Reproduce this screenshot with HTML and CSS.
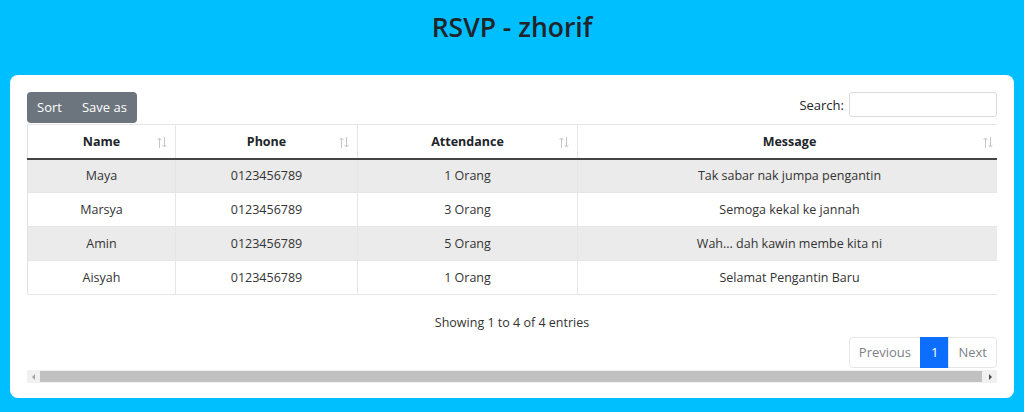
FILE: index.html
```html
<!DOCTYPE html>
<html>
<head>
<meta charset="utf-8">
<link rel="stylesheet" href="styles.css">
</head>
<body>
<header class="top">
  <h1 class="title">RSVP - zhorif</h1>
</header>
<main class="card">
  <div class="wrapper">
    <div class="toolbar">
      <div class="btn-group">
        <button class="btn">Sort</button>
        <button class="btn">Save as</button>
      </div>
      <label class="search">Search: <input class="search-input" type="text"></label>
    </div>
    <div class="scroller">
      <table class="table">
        <colgroup>
          <col class="c1"><col class="c2"><col class="c3"><col class="c4">
        </colgroup>
        <thead>
          <tr>
            <th>Name<svg class="sort" viewBox="0 0 10 11" width="10" height="11"><path d="M2.5 11V1M0.5 3L2.5 1L4.5 3M7.5 0V10M5.5 8L7.5 10L9.5 8"/></svg></th>
            <th>Phone<svg class="sort" viewBox="0 0 10 11" width="10" height="11"><path d="M2.5 11V1M0.5 3L2.5 1L4.5 3M7.5 0V10M5.5 8L7.5 10L9.5 8"/></svg></th>
            <th>Attendance<svg class="sort" viewBox="0 0 10 11" width="10" height="11"><path d="M2.5 11V1M0.5 3L2.5 1L4.5 3M7.5 0V10M5.5 8L7.5 10L9.5 8"/></svg></th>
            <th>Message<svg class="sort" viewBox="0 0 10 11" width="10" height="11"><path d="M2.5 11V1M0.5 3L2.5 1L4.5 3M7.5 0V10M5.5 8L7.5 10L9.5 8"/></svg></th>
          </tr>
        </thead>
        <tbody>
          <tr class="odd"><td>Maya</td><td>0123456789</td><td>1 Orang</td><td>Tak sabar nak jumpa pengantin</td></tr>
          <tr><td>Marsya</td><td>0123456789</td><td>3 Orang</td><td>Semoga kekal ke jannah</td></tr>
          <tr class="odd"><td>Amin</td><td>0123456789</td><td>5 Orang</td><td>Wah... dah kawin membe kita ni</td></tr>
          <tr><td>Aisyah</td><td>0123456789</td><td>1 Orang</td><td>Selamat Pengantin Baru</td></tr>
        </tbody>
      </table>
    </div>
    <div class="info">Showing 1 to 4 of 4 entries</div>
    <div class="pager-row">
      <ul class="pagination">
        <li class="page disabled">Previous</li>
        <li class="page active">1</li>
        <li class="page disabled">Next</li>
      </ul>
    </div>
    <div class="hscroll">
      <div class="arrow left"></div>
      <div class="thumb"></div>
      <div class="arrow right"></div>
    </div>
  </div>
</main>
</body>
</html>
```
FILE: styles.css
```css
* { box-sizing: border-box; }
html, body { margin: 0; padding: 0; }
body {
  background: #00bfff;
  font-family: "Open Sans", "Noto Sans", sans-serif;
  font-size: 12.5px;
  color: #212529;
  width: 1024px;
  height: 412px;
  overflow: hidden;
}
.top {
  height: 75px;
  padding-top: 8px;
}
.title {
  margin: 0;
  text-align: center;
  font-size: 26.5px;
  font-weight: 600;
  line-height: 38px;
  color: #212529;
}
.card {
  margin: 0 10px;
  background: #fff;
  border-radius: 8px;
  height: 323px;
  padding: 17px 17px 0 17px;
}
.wrapper { width: 970px; }
.toolbar {
  display: flex;
  justify-content: space-between;
  align-items: flex-start;
  height: 32px;
}
.btn-group { display: flex; border-radius: 4px; overflow: hidden; }
.btn {
  font-family: inherit;
  font-size: 13px;
  color: #fff;
  background: #6c757d;
  border: none;
  height: 31px;
  padding: 0 10px;
  margin: 0;
  line-height: 31px;
}
.btn + .btn { padding-left: 10px; }
.search {
  display: flex;
  align-items: center;
  gap: 5px;
  height: 25px;
  font-size: 13px;
  color: #212529;
}
.search-input {
  width: 148px;
  height: 25px;
  border: 1px solid #d8dbe0;
  border-radius: 3px;
  margin: 0;
}
.scroller { overflow: hidden; width: 970px; }
.table {
  border-collapse: collapse;
  table-layout: fixed;
  width: 974px;
  border-left: 1px solid #dee2e6;
}
.c1 { width: 148px; }
.c2 { width: 182px; }
.c3 { width: 220px; }
.c4 { width: 424px; }
th, td {
  text-align: center;
  border-right: 1px solid #e4e6e8;
  border-bottom: 1px solid #e4e6e8;
  padding: 0 10px;
}
th {
  position: relative;
  height: 34px;
  font-weight: 700;
  border-top: 1px solid #e4e6e8;
  border-bottom: 2px solid #444;
}
td { height: 34px; color: #333; }
.odd td { background: #ebebeb; }
.sort {
  position: absolute;
  right: 8px;
  top: 12px;
  fill: none;
  stroke: #c6c6c6;
  stroke-width: 1;
}
.info {
  text-align: center;
  margin-top: 19px;
  line-height: 18px;
  color: #333;
}
.pager-row { display: flex; justify-content: flex-end; margin-top: 5px; }
.pagination {
  display: flex;
  list-style: none;
  margin: 0;
  padding: 0;
  font-size: 13px;
}
.page {
  height: 31px;
  line-height: 29px;
  padding: 0 9px;
  border: 1px solid #e4e6e8;
  color: #7c8288;
}
.page + .page { margin-left: -1px; }
.page:first-child { border-radius: 4px 0 0 4px; }
.page:last-child { border-radius: 0 4px 4px 0; }
.page.active { background: #0d6efd; border-color: #0d6efd; color: #fff; padding: 0 10px; }
.hscroll {
  display: flex;
  height: 13px;
  margin-top: 2px;
  background: #f1f1f1;
  align-items: stretch;
}
.arrow { width: 13px; position: relative; }
.arrow::after {
  content: "";
  position: absolute;
  top: 4px;
  border-top: 3px solid transparent;
  border-bottom: 3px solid transparent;
}
.arrow.left::after { left: 5px; border-right: 3px solid #a3a3a3; }
.arrow.right::after { left: 5px; border-left: 3px solid #505050; }
.thumb { flex: 1; background: #c1c1c1; margin: 1px 2px 1px 0; }
```
